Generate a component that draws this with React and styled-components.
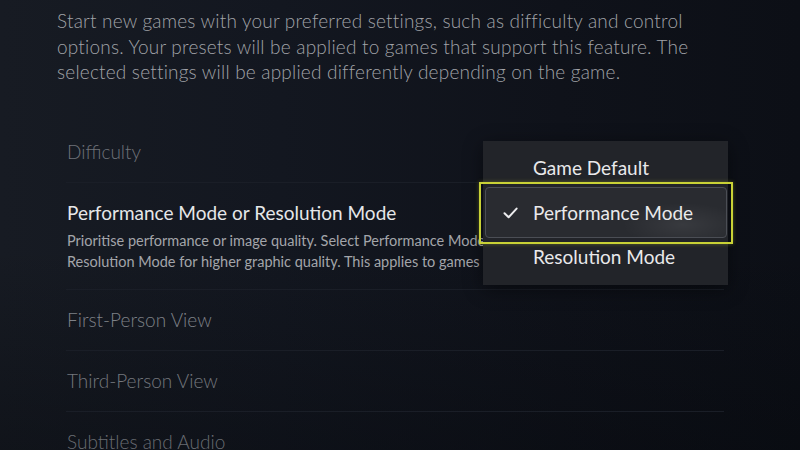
import styled, { createGlobalStyle } from "styled-components"

const GlobalStyle = createGlobalStyle`
  html, body {
    margin: 0;
    padding: 0;
    background: #11141b;
  }
  body {
    font-family: Lato, "Open Sans", sans-serif;
  }
`

const Page = styled.div`
  position: relative;
  width: 800px;
  height: 450px;
  overflow: hidden;
  background:
    linear-gradient(180deg, rgba(0,0,0,0) 55%, rgba(4,6,10,0.35) 100%),
    linear-gradient(90deg, #171b23 0%, #131720 35%, #0f121a 70%, #0c0f16 100%);
`

const Intro = styled.p`
  margin: 0;
  padding: 8px 0 0 57px;
  font-size: 19px;
  line-height: 25.5px;
  font-weight: 300;
  letter-spacing: 0.2px;
  color: #a1a3a8;
  white-space: nowrap;
`

const List = styled.div`
  width: 658px;
  margin: 37px 0 0 66px;
  overflow: hidden;
`

const Row = styled.div`
  display: flex;
  flex-direction: column;
  padding: ${p => (p.$tall ? "17px 0 16px 1px" : "17px 0 0 1px")};
  height: ${p => (p.$tall ? "auto" : "61px")};
  box-sizing: border-box;
  border-bottom: 1px solid #1a1e27;
`

const Label = styled.div`
  font-size: 19px;
  line-height: 26px;
  font-weight: 300;
  color: ${p => p.$color || "#7a7d83"};
  white-space: nowrap;
`

const Title = styled.div`
  font-size: 19px;
  line-height: 26px;
  font-weight: 400;
  color: #e6e7e9;
  white-space: nowrap;
`

const Desc = styled.div`
  margin-top: 4px;
  font-size: 14.5px;
  line-height: 21.5px;
  color: #a3a5aa;
  white-space: nowrap;
`

const Dropdown = styled.div`
  position: absolute;
  left: 483px;
  top: 141px;
  width: 245px;
  padding: 5px 0 5.5px;
  background: #222429;
  box-shadow: 0 4px 18px rgba(0, 0, 0, 0.45);
  display: flex;
  flex-direction: column;
`

const Option = styled.div`
  position: relative;
  height: 44.5px;
  display: flex;
  align-items: center;
  padding-left: 50px;
  font-size: 19px;
  line-height: 24px;
  color: #e9e9eb;
  white-space: nowrap;

  ${p => p.$focused && `
    &::before {
      content: "";
      position: absolute;
      left: 2px;
      right: 1px;
      top: -3.5px;
      bottom: -3px;
      border: 1.5px solid #4b4e55;
      border-radius: 4px;
      background:
        radial-gradient(ellipse 60px 22px at 82% 75%, rgba(255,255,255,0.07), rgba(255,255,255,0) 100%),
        #292b30;
      z-index: 0;
    }
    &::after {
      content: "";
      position: absolute;
      left: -4px;
      right: -5px;
      top: -8.5px;
      bottom: -9px;
      border: 2px solid #c9d236;
      box-shadow: 0 0 4px rgba(201, 210, 54, 0.35);
      z-index: 0;
    }
  `}
`

const OptionText = styled.span`
  position: relative;
  z-index: 1;
`

const Check = styled.svg`
  position: absolute;
  left: 20px;
  top: 50%;
  width: 15px;
  height: 12px;
  margin-top: -6px;
  z-index: 1;
`

function App() {
  return (
    <>
      <GlobalStyle />
      <Page>
        <Intro>
          Start new games with your preferred settings, such as difficulty and control<br />
          options. Your presets will be applied to games that support this feature. The<br />
          selected settings will be applied differently depending on the game.
        </Intro>
        <List>
          <Row>
            <Label $color="#6f7279">Difficulty</Label>
          </Row>
          <Row $tall>
            <Title>Performance Mode or Resolution Mode</Title>
            <Desc>
              Prioritise performance or image quality. Select Performance Mode for smoother gameplay or<br />
              Resolution Mode for higher graphic quality. This applies to games that support this feature.
            </Desc>
          </Row>
          <Row>
            <Label $color="#7e8187">First-Person View</Label>
          </Row>
          <Row>
            <Label $color="#74777d">Third-Person View</Label>
          </Row>
          <Row>
            <Label $color="#696c72">Subtitles and Audio</Label>
          </Row>
        </List>
        <Dropdown>
          <Option>
            <OptionText>Game Default</OptionText>
          </Option>
          <Option $focused>
            <Check viewBox="0 0 15 12">
              <path d="M1.5 6.2 L5.6 10.2 L13.6 1.6" fill="none" stroke="#ececee" strokeWidth="2" strokeLinecap="round" strokeLinejoin="round" />
            </Check>
            <OptionText>Performance Mode</OptionText>
          </Option>
          <Option>
            <OptionText>Resolution Mode</OptionText>
          </Option>
        </Dropdown>
      </Page>
    </>
  )
}

export default App
